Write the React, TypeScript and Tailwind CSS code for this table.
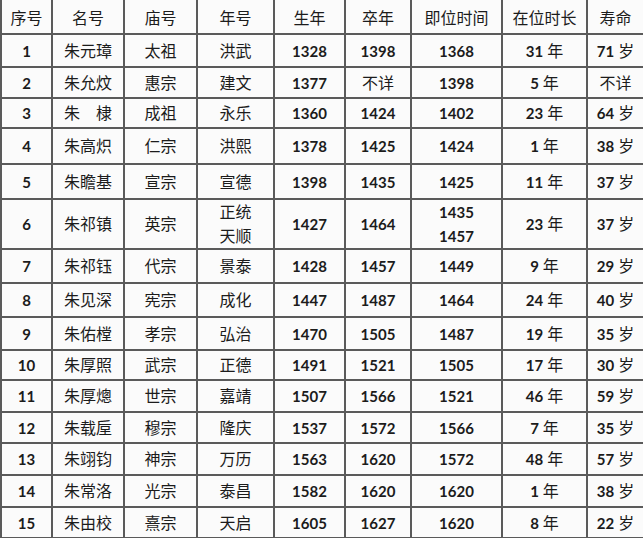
const headers = ['序号', '名号', '庙号', '年号', '生年', '卒年', '即位时间', '在位时长', '寿命'];
const widths = ['w-[51px]', 'w-[72px]', 'w-[73px]', 'w-[77px]', 'w-[71px]', 'w-[66px]', 'w-[91px]', 'w-[85px]', 'w-[57px]'];

type Row = {
    h: string;
    cells: (string | string[])[];
};

const rows: Row[] = [
    { h: 'h-[33px]', cells: ['1', '朱元璋', '太祖', '洪武', '1328', '1398', '1368', '31|年', '71|岁'] },
    { h: 'h-[31px]', cells: ['2', '朱允炆', '惠宗', '建文', '1377', '不详', '1398', '5|年', '不详'] },
    { h: 'h-[30px]', cells: ['3', '朱　棣', '成祖', '永乐', '1360', '1424', '1402', '23|年', '64|岁'] },
    { h: 'h-[36px]', cells: ['4', '朱高炽', '仁宗', '洪熙', '1378', '1425', '1424', '1|年', '38|岁'] },
    { h: 'h-[35px]', cells: ['5', '朱瞻基', '宣宗', '宣德', '1398', '1435', '1425', '11|年', '37|岁'] },
    { h: 'h-[49px]', cells: ['6', '朱祁镇', '英宗', ['正统', '天顺'], '1427', '1464', ['1435', '1457'], '23|年', '37|岁'] },
    { h: 'h-[34px]', cells: ['7', '朱祁钰', '代宗', '景泰', '1428', '1457', '1449', '9|年', '29|岁'] },
    { h: 'h-[34px]', cells: ['8', '朱见深', '宪宗', '成化', '1447', '1487', '1464', '24|年', '40|岁'] },
    { h: 'h-[33px]', cells: ['9', '朱佑樘', '孝宗', '弘治', '1470', '1505', '1487', '19|年', '35|岁'] },
    { h: 'h-[30px]', cells: ['10', '朱厚照', '武宗', '正德', '1491', '1521', '1505', '17|年', '30|岁'] },
    { h: 'h-[32px]', cells: ['11', '朱厚熜', '世宗', '嘉靖', '1507', '1566', '1521', '46|年', '59|岁'] },
    { h: 'h-[31px]', cells: ['12', '朱载垕', '穆宗', '隆庆', '1537', '1572', '1566', '7|年', '35|岁'] },
    { h: 'h-[32px]', cells: ['13', '朱翊钧', '神宗', '万历', '1563', '1620', '1572', '48|年', '57|岁'] },
    { h: 'h-[32px]', cells: ['14', '朱常洛', '光宗', '泰昌', '1582', '1620', '1620', '1|年', '38|岁'] },
    { h: 'h-[31px]', cells: ['15', '朱由校', '熹宗', '天启', '1605', '1627', '1620', '8|年', '22|岁'] },
];

const isNum = (s: string) => /^[0-9]+$/.test(s);

function Text({ value }: { value: string }) {
    if (value.includes('|')) {
        const [n, unit] = value.split('|');
        return (
            <span>
                <span className="font-num font-bold text-[15px]">{n}</span>
                <span className="text-[16px] ml-[4px]">{unit}</span>
            </span>
        );
    }
    if (isNum(value)) {
        return <span className="font-bold text-[15px]">{value}</span>;
    }
    return <span className="text-[16px]">{value}</span>;
}

export default function App() {
    return (
        <div className="w-[643px] h-[538px] bg-[#fbfbfb] overflow-hidden text-[#1c1c1c] [font-family:'Lato','Noto_Sans_CJK_SC',sans-serif]">
            <table className="table-fixed border-collapse w-[643px] text-center">
                <colgroup>
                    {widths.map((w, i) => <col key={i} className={w} />)}
                </colgroup>
                <thead>
                    <tr className="h-[34px]">
                        {headers.map(h => (
                            <th key={h} className="border-2 border-t-0 border-[#5a5a5a] font-normal text-[16px] [font-family:'Noto_Sans_CJK_SC',sans-serif]">
                                {h}
                            </th>
                        ))}
                    </tr>
                </thead>
                <tbody>
                    {rows.map((r, ri) => (
                        <tr key={ri} className={r.h}>
                            {r.cells.map((c, ci) => (
                                <td key={ci} className="border-2 border-[#5a5a5a] p-0 leading-[24px]">
                                    {Array.isArray(c) ? (
                                        <div className="flex flex-col">
                                            {c.map(x => <Text key={x} value={x} />)}
                                        </div>
                                    ) : (
                                        <Text value={c} />
                                    )}
                                </td>
                            ))}
                        </tr>
                    ))}
                </tbody>
            </table>
        </div>
    );
}
